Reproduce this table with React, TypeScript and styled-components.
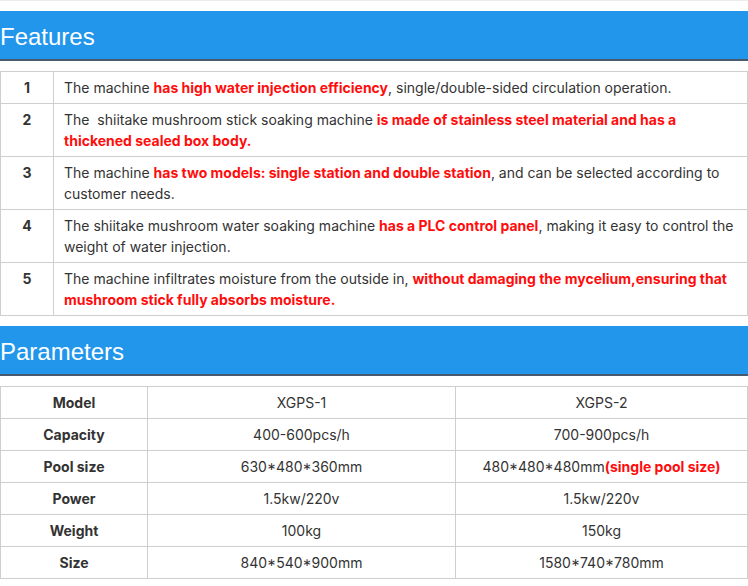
import React from "react";
import styled, { createGlobalStyle } from "styled-components";

const Global = createGlobalStyle`
  html, body { margin: 0; padding: 0; background: #fff; }
  body { font-family: Inter, "Noto Sans", sans-serif; color: #333; overflow: hidden; }
`;

const Page = styled.div`
  border-top: 1px solid #ececec;
  padding-top: 10px;
  display: flex;
  flex-direction: column;
`;

const Heading = styled.h2`
  margin: 0;
  height: 48px;
  background: #2196eb;
  border-bottom: 2px solid #4a5a6e;
  color: #fff;
  font-family: "Liberation Sans", Arial, sans-serif;
  font-weight: 400;
  font-size: 24px;
  line-height: 52px;
  padding: 0;
`;

const Table = styled.table`
  width: 100%;
  border-collapse: collapse;
  table-layout: fixed;
  margin: 10px 0;
  font-size: 14px;
  line-height: 21px;
`;

const Col = styled.col<{ $w?: number }>`
  ${(p) => (p.$w ? `width: ${p.$w}px;` : "")}
`;

const Cell = styled.td<{ $center?: boolean; $bold?: boolean }>`
  border: 1px solid #cfcfcf;
  padding: 5px 10px;
  text-align: ${(p) => (p.$center ? "center" : "left")};
  font-weight: ${(p) => (p.$bold ? 700 : 400)};
  color: #333;
  vertical-align: top;
`;

const Red = styled.strong`
  color: #ff0d0d;
  font-weight: 700;
`;

const features: React.ReactNode[] = [
  <>The machine <Red>has high water injection efficiency</Red>, single/double-sided circulation operation.</>,
  <>The&nbsp; shiitake mushroom stick soaking machine <Red>is made of stainless steel material and has a thickened sealed box body.</Red></>,
  <>The machine <Red>has two models: single station and double station</Red>, and can be selected according to customer needs.</>,
  <>The shiitake mushroom water soaking machine <Red>has a PLC control panel</Red>, making it easy to control the weight of water injection.</>,
  <>The machine infiltrates moisture from the outside in, <Red>without damaging the mycelium,ensuring that mushroom stick fully absorbs moisture.</Red></>,
];

const params: [string, React.ReactNode, React.ReactNode][] = [
  ["Model", "XGPS-1", "XGPS-2"],
  ["Capacity", "400-600pcs/h", "700-900pcs/h"],
  ["Pool size", "630*480*360mm", <>480*480*480mm<Red>(single pool size)</Red></>],
  ["Power", "1.5kw/220v", "1.5kw/220v"],
  ["Weight", "100kg", "150kg"],
  ["Size", "840*540*900mm", "1580*740*780mm"],
];

export default function App() {
  return (
    <Page>
      <Global />
      <Heading>Features</Heading>
      <Table>
        <colgroup>
          <Col $w={53} />
          <Col />
        </colgroup>
        <tbody>
          {features.map((f, i) => (
            <tr key={i}>
              <Cell $center $bold>{i + 1}</Cell>
              <Cell>{f}</Cell>
            </tr>
          ))}
        </tbody>
      </Table>
      <Heading>Parameters</Heading>
      <Table>
        <colgroup>
          <Col $w={147} />
          <Col $w={308} />
          <Col />
        </colgroup>
        <tbody>
          {params.map(([k, a, b], i) => (
            <tr key={i}>
              <Cell $center $bold>{k}</Cell>
              <Cell $center>{a}</Cell>
              <Cell $center>{b}</Cell>
            </tr>
          ))}
        </tbody>
      </Table>
    </Page>
  );
}
